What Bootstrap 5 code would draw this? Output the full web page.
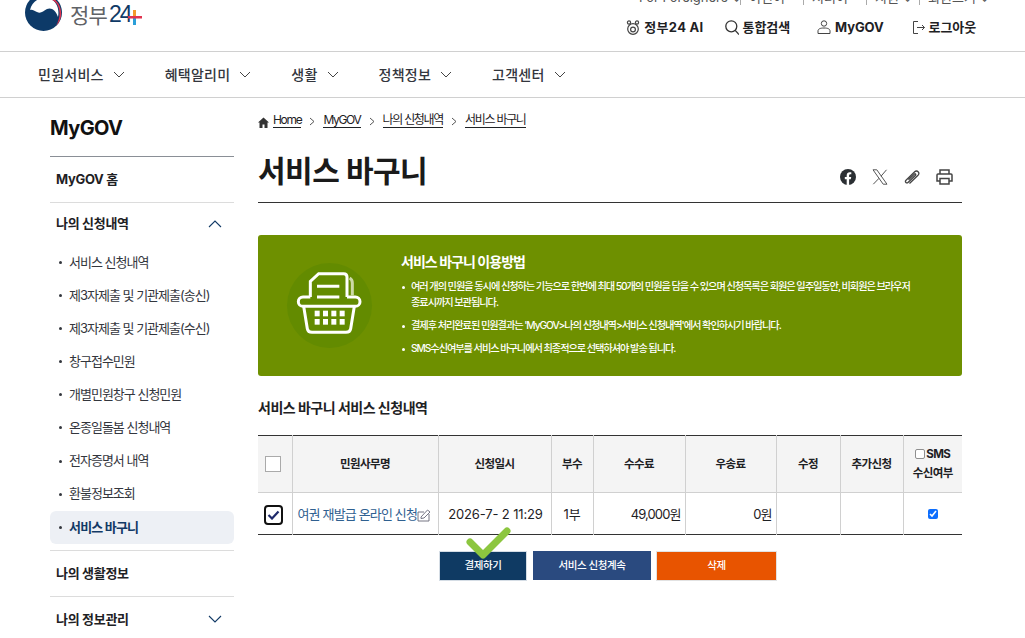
<!DOCTYPE html>
<html lang="ko">
<head>
<meta charset="utf-8">
<title>서비스 바구니</title>
<link rel="stylesheet" href="https://cdn.jsdelivr.net/npm/bootstrap@5.3.0/dist/css/bootstrap.min.css">
<style>
html,body{height:638px;overflow:hidden}
body{font-family:Inter,"Noto Sans CJK KR",sans-serif;color:#1e2124;background:#fff;font-size:13px;letter-spacing:-.4px}
a{color:inherit;text-decoration:none}
.gov-head{height:52px;border-bottom:1px solid #d0d0d0;padding:0 49px 0 25px}
.gov-logo{align-self:flex-start;gap:8px;margin-top:-6px}
.logo-text{margin-top:4px}
.logo-word{font-family:"Noto Sans CJK KR",sans-serif;font-size:21px;font-weight:400;color:#5f6266;letter-spacing:-.8px;line-height:1}
.logo-num{font-family:"Liberation Sans",sans-serif;font-size:23px;color:#0f3a66;letter-spacing:-2px;line-height:1;margin-left:2px}
.logo-plus{margin-left:-3px;margin-top:5px}
.head-right{width:340px}
.util-row{height:16px;font-size:13px;color:#555;letter-spacing:0;white-space:nowrap;line-height:16px;margin:-11px -15px 0 0}
.util-row span{flex:none;padding-left:8px;border-right:1px solid #aaa;height:16px}
.util-row span:nth-child(1){width:102px;padding-left:0}
.util-row span:nth-child(2),.util-row span:nth-child(3){width:63px}
.util-row span:nth-child(4){width:53px}
.util-row span:nth-child(5){width:71px;border:0}
.act-row{margin-top:14px;font-size:13px;font-weight:700;color:#1e2124;white-space:nowrap;letter-spacing:-.1px;line-height:16px}
.act-row .act-item{gap:4px}
.act-ai{letter-spacing:.3px}
.act-find{margin-left:21px}
.act-my{margin-left:27px}
.act-out{margin-left:29px}
.gov-nav{height:46px;border-bottom:1px solid #d0d0d0;padding-left:38px;font-size:14px;font-weight:500;color:#33363d;letter-spacing:.25px}
.gov-nav a{margin-right:40px;gap:9px}
.page-wrap{padding:0 63px 0 50px;gap:24px}
.side-col{width:184px;flex:none}
.side-title{height:59px;border-bottom:1px solid #8a8f96;font-size:20px;font-weight:700;color:#111;padding-top:18px;line-height:24px;letter-spacing:-.6px}
.side-group{border-bottom:1px solid #dcdcdc;height:46px;padding:0 12px 0 6px;font-weight:700;font-size:13px;color:#1e2124;letter-spacing:-.3px}
.side-open{border:0;height:42px}
.side-last{height:45px}
.side-list{margin:0;padding:1px 0 6px;border-bottom:1px solid #dcdcdc;font-size:13px;color:#33363d;letter-spacing:-1px}
.side-list li{height:33.1px;padding-left:19px;position:relative;display:flex;align-items:center}
.side-list li::before{content:"";position:absolute;left:9px;top:15px;width:3px;height:3px;border-radius:50%;background:#33363d}
.side-list li.now{background:#edf0f5;border-radius:6px;font-weight:700;color:#123a66;letter-spacing:-.8px}
.main-col{flex:1;min-width:0}
.crumbs{height:45px;padding-top:15px;font-size:12px;line-height:18px;gap:8px;letter-spacing:-1.3px;color:#1e2124}
.crumbs a{border-bottom:1px solid #1e2124;line-height:14px}
.crumbs svg{flex:none}
.title-bar{height:60px;border-bottom:1px solid #333;padding-bottom:11px}
.title-bar h1{font-size:30px;font-weight:700;color:#1a1a1a;margin:0;letter-spacing:-.5px;line-height:40px}
.share-set{gap:16px;padding-right:9px;padding-bottom:6px}
.guide-box{margin-top:32px;height:141px;background:#6e9000;border-radius:3px;color:#fff}
.guide-pic{width:143px;flex:none}
.guide-disc{width:85px;height:85px;border-radius:50%;background:#638b00}
.guide-title{font-size:14px;font-weight:700;margin-top:18px;line-height:18px;letter-spacing:-.95px}
.guide-list{list-style:none;margin:7px 0 0;padding:0;font-size:10.2px;font-weight:500;line-height:16px;letter-spacing:-1.05px;word-break:keep-all}
.guide-list li{position:relative;padding-left:10px;margin-bottom:7px;width:520px}
.guide-list li::before{content:"";position:absolute;left:1px;top:8px;width:3px;height:3px;border-radius:50%;background:#fff}
.sub-title{font-size:14px;font-weight:700;margin:23px 0 18px;line-height:18px;color:#1e2124;letter-spacing:-.5px}
.req-table{width:704px;table-layout:fixed;margin:0;border-collapse:collapse;border-top:1px solid #333;border-bottom:1px solid #333}
.req-table th,.req-table td{border-left:1px solid #d0d0d0;border-right:1px solid #d0d0d0;text-align:center;vertical-align:middle;padding:0;font-size:12px}
.req-table tr>*:first-child{border-left:0}
.req-table tr>*:last-child{border-right:0}
.req-table thead th{height:57px;background:#f4f4f4;border-bottom:1px solid #d0d0d0;font-weight:700;color:#1e2124;line-height:19px;letter-spacing:-.6px;font-size:11.5px}
.req-table tbody td{height:42px;font-size:13px;color:#1e2124;letter-spacing:-.15px;background:#fff;white-space:nowrap;padding-top:2px}
.req-table td.amt{text-align:right;padding-right:4px;letter-spacing:-.9px}
.req-table td.lnk{text-align:left;padding-left:5px;color:#2f6090;letter-spacing:-.85px;overflow:visible}
.req-table td.when{padding-left:2px}
.box-empty{appearance:none;width:16px;height:16px;border:1px solid #aaa;background:#fff;display:block;margin:0 0 0 7px}
.box-mini{appearance:none;width:10px;height:10px;border:1px solid #8f8f8f;border-radius:2px;background:#fff;margin:0 1px 0 0;vertical-align:-1px}
.box-sms{width:10px;height:10px;margin:0;accent-color:#0d6efd}
.box-done{width:19px;height:20px;border:2.5px solid #111;border-radius:4px;display:flex;margin:0 0 0 6px;background:#fff}
.act-btns{padding-top:16px;gap:6px;padding-left:181px;position:relative}
.act-btns .btn{height:30px;border-radius:0;font-size:10.5px;color:#fff;padding:0;letter-spacing:-.4px;font-weight:500;display:flex;align-items:center;justify-content:center}
.btn-pay{width:88px;background:#0f3a63;border:1px solid #d5dde5}
.btn-more{width:118px;background:#2a4a7f;border:0;height:29px!important}
.btn-del{width:121px;background:#e85400;border:1px solid #e2e2e2;margin-left:-1px}
.tick-mark{position:absolute;left:208px;top:-8px}
</style>
</head>
<body>
<header class="gov-head d-flex justify-content-between">
  <a class="gov-logo d-flex" href="#">
    <svg width="37" height="37" viewBox="0 0 37 37"><circle cx="18.500" cy="18.500" r="18.500" fill="#0d3a68"/><path d="M5 16C7 7 15 3 22 4 30 5 35 13 33 23 31 16 26 13 22 15 18 17 16 20 12 18 9 16.500 7 15 5 16Z" fill="#fff"/><path d="M9 3.500C18 -1 28 2 33 9 38 17 37 26 31 32 35 25 36 17 32 10 27 4 18 1.500 9 3.500Z" fill="#e0344f"/></svg>
    <span class="logo-text d-flex align-items-center"><span class="logo-word">정부</span><span class="logo-num">24</span><svg class="logo-plus" width="14" height="15" viewBox="0 0 14 15"><rect x="5" y="0" width="3" height="7" fill="#f39a2b"/><rect x="5" y="7" width="3" height="8" fill="#2a9fd8"/><rect x="0" y="6" width="14" height="2.500" fill="#e0344f"/></svg></span>
  </a>
  <div class="head-right">
    <div class="util-row d-flex justify-content-end">
      <span>For Foreigners ⌄</span><span>이런이 ▫</span><span>저러이 ▫</span><span>지원 ⌄</span><span>회원그거 ⌄</span>
    </div>
    <div class="act-row d-flex justify-content-end">
      <a class="act-item act-ai d-flex align-items-center" href="#"><svg width="14" height="15" viewBox="0 0 14 15" fill="none" stroke="#444" stroke-width="1.200"><circle cx="7" cy="9" r="5.300"/><circle cx="7" cy="9.500" r="2.400"/><circle cx="3" cy="2.500" r="1.600"/><circle cx="11" cy="2.500" r="1.600"/></svg>정부24 AI</a>
      <a class="act-item act-find d-flex align-items-center" href="#"><svg width="14" height="15" viewBox="0 0 14 15" fill="none" stroke="#333" stroke-width="1.300"><circle cx="6.300" cy="6.300" r="5.500"/><path d="M10.200 10.400 14 14.500"/></svg>통합검색</a>
      <a class="act-item act-my d-flex align-items-center" href="#"><svg width="14" height="14" viewBox="0 0 14 14" fill="none" stroke="#444" stroke-width="1"><circle cx="7" cy="3.500" r="2.700"/><path d="M1 13.500V11C1 9 3 8 7 8s6 1 6 3v2.500Z"/></svg>MyGOV</a>
      <a class="act-item act-out d-flex align-items-center" href="#"><svg width="12" height="13" viewBox="0 0 12 13" fill="none" stroke="#444" stroke-width="1"><path d="M5 .5H.5v12H5M4 6.500h7.500M9 4l2.500 2.500L9 9"/></svg><span>로그아웃</span></a>
    </div>
  </div>
</header>
<nav class="gov-nav d-flex align-items-center">
  <a class="d-flex align-items-center" href="#">민원서비스<svg width="12" height="7" viewBox="0 0 12 7" fill="none" stroke="#444"><path d="M1 1l5 5 5-5"/></svg></a>
  <a class="d-flex align-items-center" href="#">혜택알리미<svg width="12" height="7" viewBox="0 0 12 7" fill="none" stroke="#444"><path d="M1 1l5 5 5-5"/></svg></a>
  <a class="d-flex align-items-center" href="#">생활<svg width="12" height="7" viewBox="0 0 12 7" fill="none" stroke="#444"><path d="M1 1l5 5 5-5"/></svg></a>
  <a class="d-flex align-items-center" href="#">정책정보<svg width="12" height="7" viewBox="0 0 12 7" fill="none" stroke="#444"><path d="M1 1l5 5 5-5"/></svg></a>
  <a class="d-flex align-items-center" href="#">고객센터<svg width="12" height="7" viewBox="0 0 12 7" fill="none" stroke="#444"><path d="M1 1l5 5 5-5"/></svg></a>
</nav>
<div class="page-wrap d-flex">
  <aside class="side-col">
    <div class="side-title">MyGOV</div>
    <div class="side-group d-flex align-items-center">MyGOV 홈</div>
    <div class="side-group side-open d-flex align-items-center justify-content-between">나의 신청내역<svg width="14" height="8" viewBox="0 0 14 8" fill="none" stroke="#123a66" stroke-width="1.100"><path d="M1 7l6-6 6 6"/></svg></div>
    <ul class="side-list list-unstyled">
      <li>서비스 신청내역</li>
      <li>제3자제출 및 기관제출(송신)</li>
      <li>제3자제출 및 기관제출(수신)</li>
      <li>창구접수민원</li>
      <li>개별민원창구 신청민원</li>
      <li>온종일돌봄 신청내역</li>
      <li>전자증명서 내역</li>
      <li>환불정보조회</li>
      <li class="now">서비스 바구니</li>
    </ul>
    <div class="side-group d-flex align-items-center">나의 생활정보</div>
    <div class="side-group side-open side-last d-flex align-items-center justify-content-between">나의 정보관리<svg width="14" height="8" viewBox="0 0 14 8" fill="none" stroke="#123a66" stroke-width="1.100"><path d="M1 1l6 6 6-6"/></svg></div>
  </aside>
  <main class="main-col">
    <div class="crumbs d-flex align-items-start">
      <svg class="mt-1" width="11" height="11" viewBox="0 0 11 11"><path d="M5.500 .5 0 5.500h1.500V11h3V7.500h2V11h3V5.500H11Z" fill="#333"/></svg>
      <a href="#" style="margin-left:-4px">Home</a>
      <svg class="mt-1" width="6" height="9" viewBox="0 0 6 9" fill="none" stroke="#555"><path d="M1 1l4 3.500-4 3.500"/></svg>
      <a href="#">MyGOV</a>
      <svg class="mt-1" width="6" height="9" viewBox="0 0 6 9" fill="none" stroke="#555"><path d="M1 1l4 3.500-4 3.500"/></svg>
      <a href="#">나의 신청내역</a>
      <svg class="mt-1" width="6" height="9" viewBox="0 0 6 9" fill="none" stroke="#555"><path d="M1 1l4 3.500-4 3.500"/></svg>
      <a href="#">서비스 바구니</a>
    </div>
    <div class="title-bar d-flex justify-content-between align-items-end">
      <h1>서비스 바구니</h1>
      <div class="share-set d-flex align-items-center">
        <svg width="16" height="16" viewBox="0 0 16 16"><circle cx="8" cy="8" r="8" fill="#2b2f33"/><path d="M6.700 16V10.300H4.800V8h1.900V6.300C6.700 4.300 7.900 3.200 9.700 3.200c.8 0 1.600.1 1.600.1v2h-.9c-1 0-1.300.6-1.300 1.200V8h2.100l-.4 2.300H9.100V16Z" fill="#fff"/></svg>
        <svg width="16" height="16" viewBox="0 0 16 16" fill="none" stroke="#555" stroke-width="1"><path d="M1 .8h3.800l10.200 14.400h-3.800Z"/><path d="M14.500.8 9 7.200M7 9.300 1.300 15.200"/></svg>
        <svg width="16" height="16" viewBox="0 0 16 16" fill="none" stroke="#444" stroke-width="1.300"><path d="M5.500 14.500 14 6.200c2.300-2.400-1-5.700-3.300-3.400L2 11.300c-1.500 1.500.6 3.600 2 2.200l7.500-7.300c.8-.8-.3-1.900-1.100-1.100L4.500 10.800"/></svg>
        <svg width="17" height="16" viewBox="0 0 17 16" fill="none" stroke="#444" stroke-width="1.500"><path d="M4 5V1h9v4M4 12H1V6a1 1 0 0 1 1-1h13a1 1 0 0 1 1 1v6h-3"/><rect x="4" y="9.500" width="9" height="5.500"/></svg>
      </div>
    </div>
    <section class="guide-box d-flex">
      <div class="guide-pic d-flex align-items-center justify-content-center">
        <div class="guide-disc d-flex align-items-center justify-content-center">
          <svg width="85" height="85" viewBox="95 95 255 255" fill="none" stroke="#fff" stroke-width="9"><path d="M283 140Q291 145 291 155V192" stroke="#cdd9a8"/><path d="M165 197V150L190 127H265Q275 127 275 137V197"/><path d="M185 165H252M185 197H252"/><path d="M165 197H143a14 14 0 0 0 0 28H300a14 14 0 0 0 0-28H275"/><path d="M145 225 156 292Q158 303 170 303H272Q284 303 286 292L297 225"/><g fill="#fff" stroke="none"><rect x="178" y="238" width="15" height="17"/><rect x="203" y="238" width="15" height="17"/><rect x="228" y="238" width="15" height="17"/><rect x="253" y="238" width="15" height="17"/><rect x="178" y="263" width="15" height="17"/><rect x="203" y="263" width="15" height="17"/><rect x="228" y="263" width="15" height="17"/><rect x="253" y="263" width="15" height="17"/></g></svg>
        </div>
      </div>
      <div>
        <div class="guide-title">서비스 바구니 이용방법</div>
        <ul class="guide-list">
          <li>여러 개의 민원을 동시에 신청하는 기능으로 한번에 최대 50개의 민원을 담을 수 있으며 신청목록은 회원은 일주일동안, 비회원은 브라우저 종료시까지 보관됩니다.</li>
          <li>결제후 처리완료된 민원결과는 'MyGOV&gt;나의 신청내역&gt;서비스 신청내역'에서 확인하시기 바랍니다.</li>
          <li>SMS수신여부를 서비스 바구니에서 최종적으로 선택하셔야 발송 됩니다.</li>
        </ul>
      </div>
    </section>
    <h2 class="sub-title">서비스 바구니 서비스 신청내역</h2>
    <table class="req-table">
      <colgroup><col style="width:34px"><col style="width:146px"><col style="width:113px"><col style="width:42px"><col style="width:92px"><col style="width:91px"><col style="width:64px"><col style="width:63px"><col style="width:59px"></colgroup>
      <thead><tr>
        <th><input class="box-empty" type="checkbox" aria-label="전체선택"></th>
        <th>민원사무명</th><th>신청일시</th><th>부수</th><th>수수료</th><th>우송료</th><th>수정</th><th>추가신청</th>
        <th><input class="box-mini" type="checkbox" aria-label="SMS">SMS<br>수신여부</th>
      </tr></thead>
      <tbody><tr>
        <td><span class="box-done align-items-center justify-content-center"><svg width="13" height="10" viewBox="0 0 13 10" fill="none" stroke="#1f2a6b" stroke-width="2.200"><path d="M1.500 5 5 8.500 11.500 1.500"/></svg></span></td>
        <td class="lnk"><a href="#">여권 재발급 온라인 신청</a><svg width="14" height="14" viewBox="0 0 14 14" fill="none" stroke="#667" stroke-width=".9"><path d="M1 4h6M1 4v9h11V6"/><path d="M4 9l6.500-7 2.500 2-6 6-3 .5Z"/></svg></td>
        <td class="when">2026-7- 2 11:29</td>
        <td>1부</td>
        <td class="amt">49,000원</td>
        <td class="amt">0원</td>
        <td></td><td></td>
        <td><input class="box-sms" type="checkbox" checked aria-label="SMS 수신"></td>
      </tr></tbody>
    </table>
    <div class="act-btns d-flex align-items-start">
      <a class="btn btn-pay" href="#">결제하기</a>
      <a class="btn btn-more" href="#">서비스 신청계속</a>
      <a class="btn btn-del" href="#">삭제</a>
      <svg class="tick-mark" width="46" height="34" viewBox="0 0 46 34" fill="none" stroke="#8cc63f" stroke-width="7" stroke-linecap="round" stroke-linejoin="round"><path d="M4 15 17 28 41 4"/></svg>
    </div>
  </main>
</div>
</body>
</html>
